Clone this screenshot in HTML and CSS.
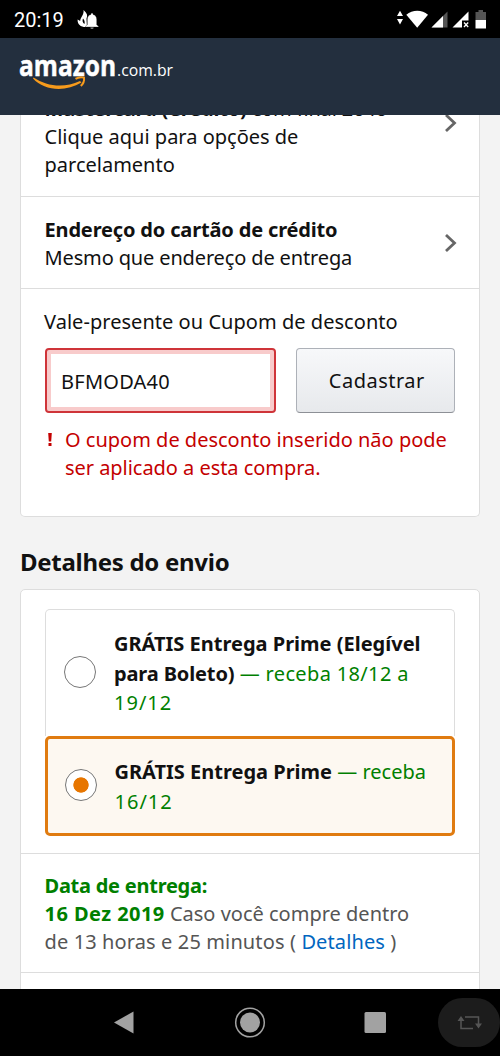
FILE: index.html
```html
<!DOCTYPE html>
<html lang="pt-BR">
<head>
<meta charset="utf-8">
<title>amazon.com.br</title>
<link rel="stylesheet" href="styles.css">
</head>
<body>
<div class="phone">
  <div class="status">
    <span class="clock">20:19</span>
    <svg class="status-left" width="24" height="22" viewBox="0 0 24 22" fill="#fff">
      <path d="M6.500 0C10 3 11 5.500 9.500 8.500L10 17C4 17.500.3 14.500.6 9.500L3.200 11C3.200 7.500 7.300 5 6.500 0z"/>
      <path d="M6 8.500C7.500 10 8 12 7.500 14C5.500 12.800 5 10.500 6 8.500z" fill="#000"/>
      <path d="M10.300 14.800V9.200c0-2.700 1.700-4.400 3.700-4.800V3.200h2v1.200c2 .4 3.700 2.100 3.700 4.800v5.600l1.800 1.400v.8H8.500v-.8zM13.300 17.500h3.400a1.700 1.300 0 0 1-3.400 0z" stroke="#000" stroke-width=".3"/>
    </svg>
    <svg class="status-right" width="94" height="24" viewBox="0 0 94 24" fill="#fff">
      <path d="M0 6L3 .8 6 6zM0 9h6L3 14.500z"/>
      <path d="M9.300 4.800C15.500-.6 25 -.6 31 4.800L20.200 17.800z"/>
      <path d="M34.500 17.500L50.500 1.500v16z" fill="#555"/>
      <path d="M34.500 17.500L46 6v11.500z"/>
      <path d="M55.500 17.500L71.500 1.500v9H65v7z"/>
      <path d="M67 12.500l4.200 4.500m0-4.500L67 17" stroke="#fff" stroke-width="1.300"/>
      <path d="M78.500 2h3V0h4.500v2h3v8H78.500z" fill="#555"/>
      <path d="M78.500 10H89v8.500H78.500z"/>
    </svg>
  </div>
  <header class="header">
    <svg width="160" height="44" viewBox="0 0 160 44">
      <text class="logo" x="-1" y="23" textLength="97" lengthAdjust="spacingAndGlyphs">amazon</text>
      <text class="domain" x="97" y="23" textLength="56" lengthAdjust="spacingAndGlyphs">.com.br</text>
      <path d="M13.500 24.500C27 33.500 44 35.500 60 28L61.500 29.500C45 39.500 24 37.500 13 25.500z" fill="#f79b1c"/>
      <path d="M55.500 25.800c3-1.800 6.500-1.800 8.500-1.200.4 2.800-1 6.400-3.200 8.400" fill="none" stroke="#f79b1c" stroke-width="2"/>
    </svg>
  </header>
  <main class="page">
    <section class="card card-pay">
      <div class="row row-card">
        <div><span class="line l-master"><b>Mastercard (Crédito)</b> com final 2646</span>
          <span class="line">Clique aqui para opções de</span>
          <span class="line">parcelamento</span></div>
        <svg class="chev" width="14" height="20" viewBox="0 0 14 20"><path d="M2 2l8.500 8L2 18"/></svg>
      </div>
      <div class="row row-address">
        <div><b class="line l-end">Endereço do cartão de crédito</b>
          <span class="line l-mesmo">Mesmo que endereço de entrega</span></div>
        <svg class="chev" width="14" height="20" viewBox="0 0 14 20"><path d="M2 2l8.500 8L2 18"/></svg>
      </div>
      <div class="row-coupon">
        <label class="line l-vale">Vale-presente ou Cupom de desconto</label>
        <div class="form"><div class="field"><span class="l-code">BFMODA40</span></div><div class="button"><span class="l-cad">Cadastrar</span></div></div>
        <div class="error">
          <svg width="20" height="28" viewBox="0 0 20 28" fill="#c40000"><path d="M3.200 7h3.600L6.200 15.500H3.800zM3.500 17h3v3h-3z"/></svg>
          <div><span class="line">O cupom de desconto inserido não pode</span><span class="line l-err">ser aplicado a esta compra.</span></div>
        </div>
      </div>
    </section>
    <h2 class="title">Detalhes do envio</h2>
    <section class="card card-ship">
      <div class="options">
        <div class="option">
          <span class="radio"></span>
          <div><b class="line l-o1">GRÁTIS Entrega Prime (Elegível</b>
            <span class="line"><b class="l-boleto">para Boleto)</b> <span class="green l-receba">— receba 18/12 a</span></span>
            <span class="line l-day green">19/12</span></div>
        </div>
        <div class="option selected">
          <span class="radio on"></span>
          <div><span class="line"><b>GRÁTIS Entrega Prime</b> <span class="green">— receba</span></span>
            <span class="line l-day green">16/12</span></div>
        </div>
      </div>
      <div class="delivery">
        <b class="line l-data green">Data de entrega:</b>
        <span class="line"><b class="green l-date">16 Dez 2019</b> Caso você compre dentro</span>
        <span class="line l-horas">de 13 horas e 25 minutos ( <a class="link">Detalhes</a> )</span>
      </div>
    </section>
  </main>
  <nav class="nav">
    <svg width="500" height="67" viewBox="0 0 500 67" fill="#a2a2a2">
      <path d="M114 33.500L133.500 22.500v22z"/>
      <circle cx="250" cy="33.500" r="14.300" fill="none" stroke="#a2a2a2" stroke-width="1.500"/>
      <circle cx="250" cy="33.500" r="10"/>
      <rect x="364.500" y="23" width="21.500" height="21" rx="1.500"/>
      <rect x="438" y="9" width="62" height="49" rx="24.500" fill="#1c1c1c"/>
      <path d="M461 31v8.500h12M465 28h13.500v8" fill="none" stroke="#555" stroke-width="1.500"/>
      <path d="M457.500 32l3.500-5 3.500 5zM475 34.500h7L478.500 39.500z" fill="#555"/>
    </svg>
  </nav>
</div>
</body>
</html>
```
FILE: styles.css
```css
* { box-sizing: border-box; }
body { margin: 0; background: #f3f3f3; color: #111; font: 20px/28px "Noto Sans", "Open Sans", sans-serif; }
.phone { width: 500px; height: 1056px; display: flex; flex-direction: column; overflow: hidden; }
.status { height: 38px; flex: none; background: #000; display: flex; align-items: flex-start; padding: 10px 13px 0 14px; }
.clock { font: 400 20px/20px Roboto, sans-serif; color: #fff; width: 63px; }
.status-right { margin-left: auto; margin-right: -4px; }
.header { height: 77px; flex: none; background: #232f3e; padding: 16px 20px; }
.header svg { display: block; margin-top: -1px; overflow: visible; }
.logo { font: 700 29px "Open Sans", sans-serif; fill: #fff; stroke: #fff; stroke-width: .5px; }
.domain { font: 400 17px "Open Sans", sans-serif; fill: #fff; }
.page { height: 874px; flex: none; overflow: hidden; padding: 0 20px; }
.card { background: #fff; border: 1px solid #ddd; }
.card-pay { height: 402px; border-top: 0; border-radius: 0 0 5px 5px; }
.line { display: block; white-space: nowrap; }
.row { display: flex; justify-content: space-between; border-bottom: 1px solid #ddd; padding: 0 21px 0 23.500px; }
.row-card { height: 82px; }
.row-card > div { margin-top: -20px; }
.row-card .chev { margin-top: -2px; }
.row-address { height: 92px; padding-top: 19px; }
.row-address .chev { margin-top: 17px; }
.chev { flex: none; fill: none; stroke: #666; stroke-width: 2.800; }
.row-coupon { padding: 19px 24px 0 23px; }
.form { display: flex; gap: 20px; margin-top: 12px; margin-left: .5px; }
.field { width: 232px; height: 65px; border: 2px solid #cf3439; border-radius: 4px; box-shadow: inset 0 0 0 4px #f8cbcb; padding: 18px 14.500px; line-height: 28px; }
.button { width: 160px; height: 65px; border: 1px solid #adb1b8; border-bottom-color: #8d9096; border-radius: 4px; background: linear-gradient(#f7f8fa, #e7e9ec); padding-left: 3px; text-align: center; line-height: 64px; }
.error { display: flex; color: #c40000; margin-top: 13px; margin-left: 1px; }
.title { margin: 0; height: 72px; padding-top: 31px; font-size: 24px; line-height: 28px; letter-spacing: -.29px; white-space: nowrap; }
.card-ship { height: 420px; padding-top: 19px; border-radius: 5px 5px 0 0; }
.options { margin: 0 24px; line-height: 29.600px; }
.option { height: 127px; border: 1px solid #ddd; border-bottom: 0; border-radius: 5px 5px 0 0; display: flex; align-items: center; padding: 1px 0 0 18px; gap: 18px; }
.selected { height: 100px; border: 3px solid #e07b10; border-radius: 5px; background: #fdf8f1; padding: 1px 0 0 16.500px; }
.radio { width: 32px; height: 32px; flex: none; margin-bottom: 4px; border: 1px solid #777; border-radius: 50%; background: #fff; }
.on { background: radial-gradient(circle, #e77600 0 7.300px, #fff 8px); }
.green { color: #007f00; }
.delivery { height: 120px; margin-top: 17px; border-top: 1px solid #ddd; border-bottom: 1px solid #ddd; padding: 18px 23.500px; color: #555; }
.link { color: #0066c0; }
.l-master { letter-spacing: -.16px; }
.l-end { letter-spacing: -.16px; }
.l-mesmo { letter-spacing: -.14px; }
.l-vale { letter-spacing: .04px; }
.l-code { letter-spacing: .25px; }
.l-cad { letter-spacing: .5px; }
.l-err { letter-spacing: -.04px; }
.l-boleto { letter-spacing: -.13px; }
.l-receba { letter-spacing: .35px; }
.l-day { letter-spacing: 1px; }
.l-data { letter-spacing: -.25px; }
.l-date { letter-spacing: .45px; }
.l-horas { letter-spacing: .12px; }
.nav { height: 67px; flex: none; background: #000; }
.nav svg { display: block; }
```
